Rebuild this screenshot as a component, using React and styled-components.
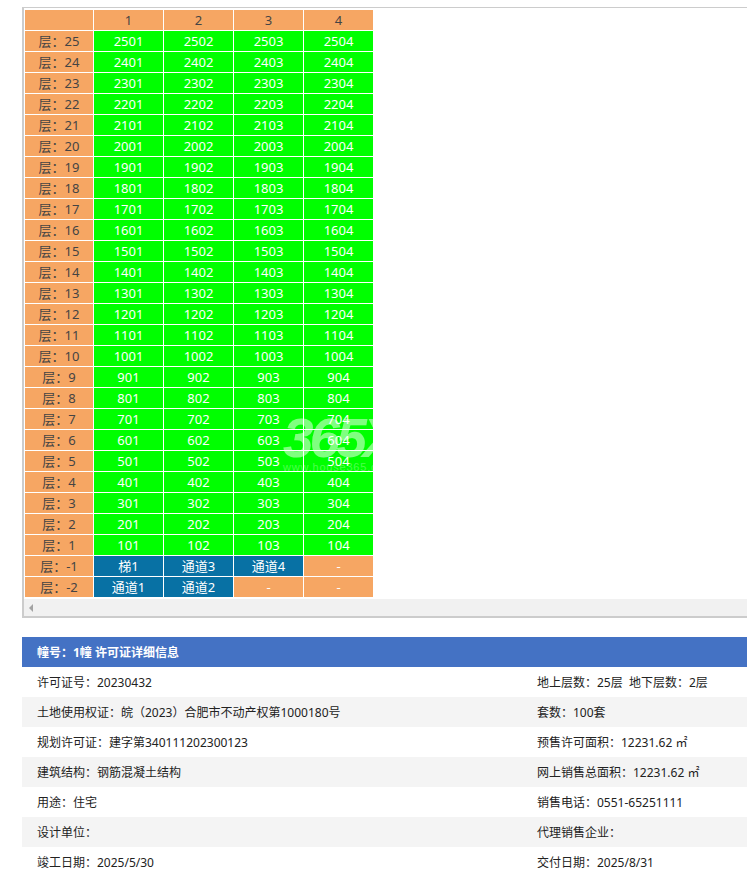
import React from "react";
import styled, { createGlobalStyle } from "styled-components";

const GlobalStyle = createGlobalStyle`
  html, body {
    margin: 0;
    padding: 0;
    background: #fff;
    font-family: "Noto Sans", "Noto Sans CJK SC", sans-serif;
    font-size: 13px;
    color: #333;
  }
`;

const Page = styled.div`
  width: 747px;
  height: 891px;
  overflow: hidden;
  padding: 7px 0 0 22px;
  box-sizing: border-box;
`;

const ScrollBox = styled.div`
  position: relative;
  width: 725px;
  height: 611px;
  box-sizing: border-box;
  border: solid #ccc;
  border-width: 1px 0 2px 2px;
  overflow: hidden;
`;

const Grid = styled.table`
  border-collapse: separate;
  border-spacing: 1px;
  table-layout: fixed;
  width: 349px;
  margin: 1px 0 0 0;
`;

const Cell = styled.td`
  height: 20px;
  padding: 0;
  text-align: center;
  line-height: 20px;
  font-size: 13px;
  white-space: nowrap;
  color: ${(p) => (p.$kind === "label" ? "#444" : "#fff")};
  background: ${(p) =>
    p.$kind === "sold" ? "#00ff00" : p.$kind === "door" ? "#0871a4" : "#f6a663"};
`;

const Scrollbar = styled.div`
  position: absolute;
  left: 0;
  right: 0;
  bottom: 0;
  height: 17px;
  background: #f1f1f1;
`;

const ArrowLeft = styled.span`
  position: absolute;
  left: 5px;
  top: 5px;
  border-style: solid;
  border-width: 4px 4px 4px 0;
  border-color: transparent #a3a3a3 transparent transparent;
`;

const Watermark = styled.div`
  position: absolute;
  left: 259px;
  top: 407px;
  color: rgba(255, 255, 255, 0.5);
  pointer-events: none;
`;

const MarkBig = styled.div`
  font-family: "Liberation Sans", sans-serif;
  font-size: 55px;
  font-weight: 700;
  font-style: italic;
  line-height: 47px;
  letter-spacing: -4px;
  white-space: nowrap;
`;

const MarkSmall = styled.div`
  font-family: "Liberation Sans", sans-serif;
  font-size: 11px;
  line-height: 10px;
  letter-spacing: 0.8px;
  white-space: nowrap;
  color: rgba(255, 255, 255, 0.3);
`;

const Info = styled.section`
  width: 725px;
  margin-top: 19px;
`;

const InfoTitle = styled.div`
  height: 30px;
  line-height: 32px;
  padding-left: 15px;
  background: #4472c4;
  color: #fff;
  font-size: 12px;
  font-weight: 700;
`;

const InfoRow = styled.div`
  display: grid;
  grid-template-columns: 500px 1fr;
  height: 30px;
  line-height: 32px;
  font-size: 12px;
  color: #222;
  background: ${(p) => (p.$odd ? "#f4f4f4" : "#fff")};
`;

const InfoCell = styled.div`
  padding-left: 15px;
  white-space: pre;
`;

const floors = [];
for (let f = 25; f >= 1; f--) floors.push(f);

// full-width punctuation, written as escapes on purpose
const C = "\uFF1A";
const LP = "\uFF08";
const RP = "\uFF09";

const infoRows = [
  [`许可证号${C}20230432`, `地上层数${C}25层  地下层数${C}2层`],
  [`土地使用权证${C}皖${LP}2023${RP}合肥市不动产权第1000180号`, `套数${C}100套`],
  [`规划许可证${C}建字第340111202300123`, `预售许可面积${C}12231.62 ㎡`],
  [`建筑结构${C}钢筋混凝土结构`, `网上销售总面积${C}12231.62 ㎡`],
  [`用途${C}住宅`, `销售电话${C}0551-65251111`],
  [`设计单位${C}`, `代理销售企业${C}`],
  [`竣工日期${C}2025/5/30`, `交付日期${C}2025/8/31`],
];

const basement = [
  { floor: -1, cells: ["梯1", "通道3", "通道4", "-"] },
  { floor: -2, cells: ["通道1", "通道2", "-", "-"] },
];

export default function App() {
  return (
    <Page>
      <GlobalStyle />
      <ScrollBox>
        <Grid>
          <colgroup>
            <col style={{ width: 68 }} />
            <col style={{ width: 69 }} />
            <col style={{ width: 69 }} />
            <col style={{ width: 69 }} />
            <col style={{ width: 69 }} />
          </colgroup>
          <tbody>
            <tr>
              <Cell $kind="label" />
              {[1, 2, 3, 4].map((n) => (
                <Cell $kind="label" key={n}>
                  {n}
                </Cell>
              ))}
            </tr>
            {floors.map((f) => (
              <tr key={f}>
                <Cell $kind="label">{`层${C}${f}`}</Cell>
                {[1, 2, 3, 4].map((n) => (
                  <Cell $kind="sold" key={n}>
                    {f * 100 + n}
                  </Cell>
                ))}
              </tr>
            ))}
            {basement.map((row) => (
              <tr key={row.floor}>
                <Cell $kind="label">{`层${C}${row.floor}`}</Cell>
                {row.cells.map((c, i) => (
                  <Cell $kind={c === "-" ? "empty" : "door"} key={i}>
                    {c}
                  </Cell>
                ))}
              </tr>
            ))}
          </tbody>
        </Grid>
        <Watermark>
          <MarkBig>365X</MarkBig>
          <MarkSmall>www.house365.com</MarkSmall>
        </Watermark>
        <Scrollbar>
          <ArrowLeft />
        </Scrollbar>
      </ScrollBox>
      <Info>
        <InfoTitle>{`幢号${C}1幢 许可证详细信息`}</InfoTitle>
        {infoRows.map(([a, b], i) => (
          <InfoRow key={i} $odd={i % 2 === 1}>
            <InfoCell>{a}</InfoCell>
            <InfoCell>{b}</InfoCell>
          </InfoRow>
        ))}
      </Info>
    </Page>
  );
}
